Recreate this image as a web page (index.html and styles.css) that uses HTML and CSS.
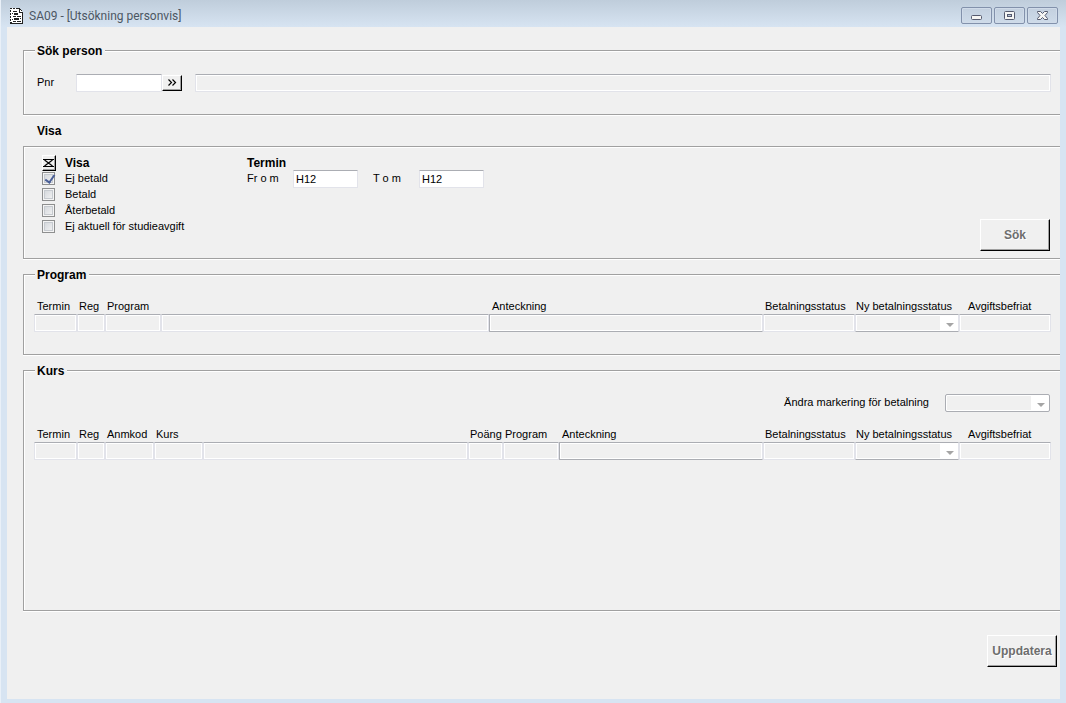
FILE: index.html
```html
<!DOCTYPE html>
<html lang="sv">
<head>
<meta charset="utf-8">
<title>SA09 - [Utsökning personvis]</title>
<link rel="stylesheet" href="styles.css">
</head>
<body>
<div class="window">
  <header class="titlebar">
    <svg class="app-icon" width="13" height="16" viewBox="0 0 13 16" shape-rendering="crispEdges" aria-hidden="true">
      <path fill="#fff" d="M0 0h9l3 3v12H0z"/>
      <path fill="#222" d="M0 0h2v1H0zM3 0h2v1H3zM6 0h4v1H6zM9 1h1v3h3v12H1v-1h11V5H9zM10 1h1v1h-1zM11 2h1v1h-1zM0 2h1v2H0zM0 5h1v2H0zM0 8h1v2H0zM0 11h1v2H0zM0 14h2v2H0zM3 3h4v1H3zM2 5h1v1H2zM4 5h4v2H4zM3 8h3v1H3zM7 8h4v1H7zM4 10h5v2H4zM2 11h1v1H2zM10 10h1v1h-1zM3 13h3v1H3zM7 13h4v1H7z"/>
    </svg>
    <h1 class="title">SA09 - [Utsökning personvis]</h1>
    <div class="window-buttons">
      <button class="window-button" type="button" aria-label="Minimera">
        <svg width="13" height="11" viewBox="0 0 13 11"><rect x="1.5" y="5.5" width="10" height="4" rx="1" fill="#f6f6f4" stroke="#555a6e"/></svg>
      </button>
      <button class="window-button" type="button" aria-label="Återställ">
        <svg width="13" height="11" viewBox="0 0 13 11"><rect x="1.5" y="1.5" width="10" height="8" rx="1" fill="#f6f6f4" stroke="#555a6e"/><rect x="4.5" y="4.5" width="4" height="2" fill="#b9c8dc" stroke="#555a6e"/></svg>
      </button>
      <button class="window-button" type="button" aria-label="Stäng">
        <svg width="13" height="11" viewBox="0 0 13 11"><path d="M1.500 1.500h3l2 2 2-2h3v1l-2.500 3 2.500 3v1h-3l-2-2-2 2h-3v-1l2.500-3-2.500-3z" fill="#f6f6f4" stroke="#555a6e" stroke-linejoin="round"/></svg>
      </button>
    </div>
  </header>

  <main class="content">
    <fieldset class="group">
      <legend class="legend">Sök person</legend>
      <div class="person-row">
        <label class="person-label" for="pnr">Pnr</label>
        <input class="field pnr" id="pnr" type="text">
        <button class="raised lookup" type="button" aria-label="Sök person">
          <svg width="9" height="8" viewBox="0 0 9 8" aria-hidden="true"><path d="M0.500 0.500l3 3-3 3M4.500 0.500l3 3-3 3" fill="none" stroke="#000" stroke-width="1.200"/></svg>
        </button>
        <input class="field person-name" type="text" aria-label="Namn" disabled>
      </div>
    </fieldset>

    <h2 class="heading visa-heading">Visa</h2>
    <section class="group visa">
      <div class="choices">
        <button class="raised mark-all" type="button" aria-label="Markera alla">
          <svg width="12" height="10" viewBox="0 0 12 10" aria-hidden="true"><path d="M0 1.500h11M0 8.500h11M1.500 2l8 6M9.500 2l-8 6" fill="none" stroke="#000" stroke-width="1.200"/></svg>
        </button>
        <h3 class="heading">Visa</h3>
        <input class="check" type="checkbox" id="unpaid" checked><label for="unpaid">Ej betald</label>
        <input class="check" type="checkbox" id="paid"><label for="paid">Betald</label>
        <input class="check" type="checkbox" id="refunded"><label for="refunded">Återbetald</label>
        <input class="check" type="checkbox" id="exempt"><label for="exempt">Ej aktuell för studieavgift</label>
      </div>
      <div class="term">
        <h3 class="heading">Termin</h3>
        <div class="term-row">
          <label class="term-label" for="from">Fr o m</label>
          <input class="field term-field" id="from" type="text" value="H12">
          <label class="term-label" for="to">T o m</label>
          <input class="field term-field" id="to" type="text" value="H12">
        </div>
      </div>
      <button class="raised action" type="button" disabled>Sök</button>
    </section>

    <fieldset class="group">
      <legend class="legend">Program</legend>
      <table class="records">
        <colgroup><col class="w-term"><col class="w-reg"><col class="w-program"><col><col class="w-note-wide"><col class="w-status"><col class="w-new"><col class="w-exempt"></colgroup>
        <thead>
          <tr><th class="edge">Termin</th><th>Reg</th><th colspan="2">Program</th><th class="edge">Anteckning</th><th>Betalningsstatus</th><th class="tight">Ny betalningsstatus</th><th class="indent">Avgiftsbefriat</th></tr>
        </thead>
        <tbody>
          <tr>
            <td><input class="field" aria-label="Termin" disabled></td>
            <td><input class="field" aria-label="Reg" disabled></td>
            <td><input class="field" aria-label="Programkod" disabled></td>
            <td><input class="field" aria-label="Program" disabled></td>
            <td><input class="field note" aria-label="Anteckning" disabled></td>
            <td><input class="field" aria-label="Betalningsstatus" disabled></td>
            <td><div class="dropdown"><select class="field select" aria-label="Ny betalningsstatus" disabled><option></option></select></div></td>
            <td><input class="field" aria-label="Avgiftsbefriat" disabled></td>
          </tr>
        </tbody>
      </table>
    </fieldset>

    <fieldset class="group courses">
      <legend class="legend">Kurs</legend>
      <div class="mark-row">
        <label class="mark-label" for="mark">Ändra markering för betalning</label>
        <div class="dropdown mark-select"><select class="field select boxed" id="mark" disabled><option></option></select></div>
      </div>
      <table class="records">
        <colgroup><col class="w-term"><col class="w-reg"><col class="w-code"><col class="w-code"><col><col class="w-points"><col class="w-program"><col class="w-note"><col class="w-status"><col class="w-new"><col class="w-exempt"></colgroup>
        <thead>
          <tr><th class="edge">Termin</th><th>Reg</th><th>Anmkod</th><th colspan="2">Kurs</th><th>Poäng</th><th>Program</th><th class="edge">Anteckning</th><th>Betalningsstatus</th><th class="tight">Ny betalningsstatus</th><th class="indent">Avgiftsbefriat</th></tr>
        </thead>
        <tbody>
          <tr>
            <td><input class="field" aria-label="Termin" disabled></td>
            <td><input class="field" aria-label="Reg" disabled></td>
            <td><input class="field" aria-label="Anmkod" disabled></td>
            <td><input class="field" aria-label="Kurskod" disabled></td>
            <td><input class="field" aria-label="Kurs" disabled></td>
            <td><input class="field" aria-label="Poäng" disabled></td>
            <td><input class="field" aria-label="Program" disabled></td>
            <td><input class="field note" aria-label="Anteckning" disabled></td>
            <td><input class="field" aria-label="Betalningsstatus" disabled></td>
            <td><div class="dropdown"><select class="field select" aria-label="Ny betalningsstatus" disabled><option></option></select></div></td>
            <td><input class="field" aria-label="Avgiftsbefriat" disabled></td>
          </tr>
        </tbody>
      </table>
    </fieldset>

    <footer class="footer">
      <button class="raised action" type="button" disabled>Uppdatera</button>
    </footer>
  </main>
</div>
</body>
</html>
```

FILE: styles.css
```css
* { box-sizing: border-box; }

body {
  margin: 0;
  font: 11px/16px "Liberation Sans", Arial, sans-serif;
  color: #000;
}

button, input, select { margin: 0; font: inherit; color: inherit; }

.window {
  display: flex;
  flex-direction: column;
  min-height: 100vh;
  padding: 0 6px 4px 7px;
  background: linear-gradient(#bfcddb, #d7e4f2 27px);
  box-shadow: inset 1px 0 #e9f0f8;
}

.titlebar {
  display: flex;
  align-items: center;
  height: 27px;
  padding: 4px 2px 0 3px;
}

.app-icon { flex: none; }

.title {
  flex: 1;
  margin: 0 0 0 6px;
  font: 12px/16px Roboto, "Open Sans", sans-serif;
  color: #4c5763;
}

.window-buttons { display: flex; gap: 2px; }

.window-button {
  display: flex;
  align-items: center;
  justify-content: center;
  width: 31px;
  height: 17px;
  padding: 0;
  border: 1px solid #8291ab;
  border-radius: 2px;
  background: linear-gradient(#c3d0df, #cedbe9);
  box-shadow: inset 0 0 0 1px #d0dbe9;
}

.content {
  flex: 1;
  display: flex;
  flex-direction: column;
  gap: 8px;
  padding: 16px 0 32px 16px;
  background: #f0f0f0;
}

.group {
  min-width: 0;
  margin: 0;
  padding: 16px 9px 22px 10px;
  border: 1px solid #a0a0a0;
  border-right: 0;
  box-shadow: inset 1px 1px #fff, 0 1px #fff;
}

.legend {
  margin-left: 1px;
  padding: 2px 3px 0 2px;
  background: #f0f0f0;
  font-weight: bold;
  font-size: 12px;
  line-height: 13px;
}

.heading { margin: 0; font-size: 12px; line-height: 16px; }

.visa-heading { padding-left: 14px; }

.field {
  display: block;
  width: 100%;
  height: 18px;
  padding: 0 2px;
  border: 1px solid #e2e3ea;
  border-top-color: #abadb3;
  border-radius: 1px;
  background: #fff;
}

.field:disabled {
  opacity: 1;
  background: #f0f0f0;
  box-shadow: inset 0 0 0 1px #fff;
}

.person-row { display: flex; align-items: center; padding-left: 3px; }
.person-label { width: 39px; line-height: 14px; padding-bottom: 2px; }
.pnr { width: 86px; }
.person-name { flex: 1; margin-left: 13px; }

.raised {
  display: flex;
  align-items: center;
  justify-content: center;
  padding: 0;
  border: 1px solid #000;
  border-top-color: #fff;
  border-left-color: #fff;
  background: #f0f0f0;
  box-shadow: inset -1px -1px #a0a0a0;
}

.lookup { width: 20px; height: 16px; }

.visa {
  display: flex;
  padding: 8px 10px 7px 18px;
  margin-top: -1px;
}

.choices {
  display: grid;
  grid-template-columns: 23px auto;
  grid-auto-rows: 16px;
  align-content: start;
  align-items: start;
  width: 205px;
  line-height: 14px;
}

.mark-all { width: 14px; height: 16px; }

.check {
  appearance: none;
  position: relative;
  width: 13px;
  height: 13px;
  margin-top: 1px;
  border: 1px solid #8e8f8f;
  background: linear-gradient(135deg, #cfd3d8, #f6f6f6);
  box-shadow: inset 0 0 0 1px #f4f4f4, inset 0 0 0 2px #c6cacf;
}

.check:checked::after {
  content: "";
  position: absolute;
  top: 0;
  left: 4px;
  width: 4px;
  height: 8px;
  border: solid #4a5f97;
  border-width: 0 2px 2px 0;
  transform: rotate(35deg);
}

.term { flex: 1; }
.term-row { display: flex; line-height: 14px; }
.term-label { width: 46px; }
.term-field { width: 65px; margin: -1px 15px 0 0; }

.action {
  min-width: 70px;
  height: 32px;
  font-size: 12px;
  font-weight: bold;
  color: #6d6d6d;
  text-shadow: 1px 1px #fff;
}

.visa .action { align-self: flex-end; margin-top: 64px; }

.records {
  width: 100%;
  table-layout: fixed;
  border-collapse: collapse;
}

.records th {
  padding: 0 0 0 2px;
  font-weight: normal;
  text-align: left;
  white-space: nowrap;
}

.records .edge { padding-left: 3px; }
.records .tight { padding-left: 1px; }
.records .indent { padding-left: 9px; }
.records td { padding: 0; }

.w-term { width: 43px; }
.w-reg { width: 28px; }
.w-program { width: 56px; }
.w-code { width: 49px; }
.w-points { width: 35px; }
.w-note { width: 204px; }
.w-note-wide { width: 274px; }
.w-status { width: 92px; }
.w-new { width: 104px; }
.w-exempt { width: 92px; }

.note {
  border-left-color: #abadb3;
  border-bottom-color: #abadb3;
}

.dropdown { position: relative; }

.select {
  appearance: none;
  border-bottom-color: #abadb3;
}

.select:disabled { background: linear-gradient(#fff, #fff) right / 18px 100% no-repeat #f0f0f0; }

.boxed { border-color: #abadb3; border-radius: 2px; }

.dropdown::after {
  content: "";
  position: absolute;
  top: 9px;
  right: 5px;
  border: 4px solid transparent;
  border-top-color: #a5a5a5;
  border-bottom: 0;
}

.courses { flex: 1; }

.mark-row {
  display: flex;
  justify-content: flex-end;
  align-items: center;
  gap: 16px;
  margin-bottom: 14px;
}

.mark-label { line-height: 14px; padding-bottom: 2px; }
.mark-select { width: 105px; margin-right: 1px; }

.footer {
  display: flex;
  justify-content: flex-end;
  padding: 16px 3px 0 0;
}
```
